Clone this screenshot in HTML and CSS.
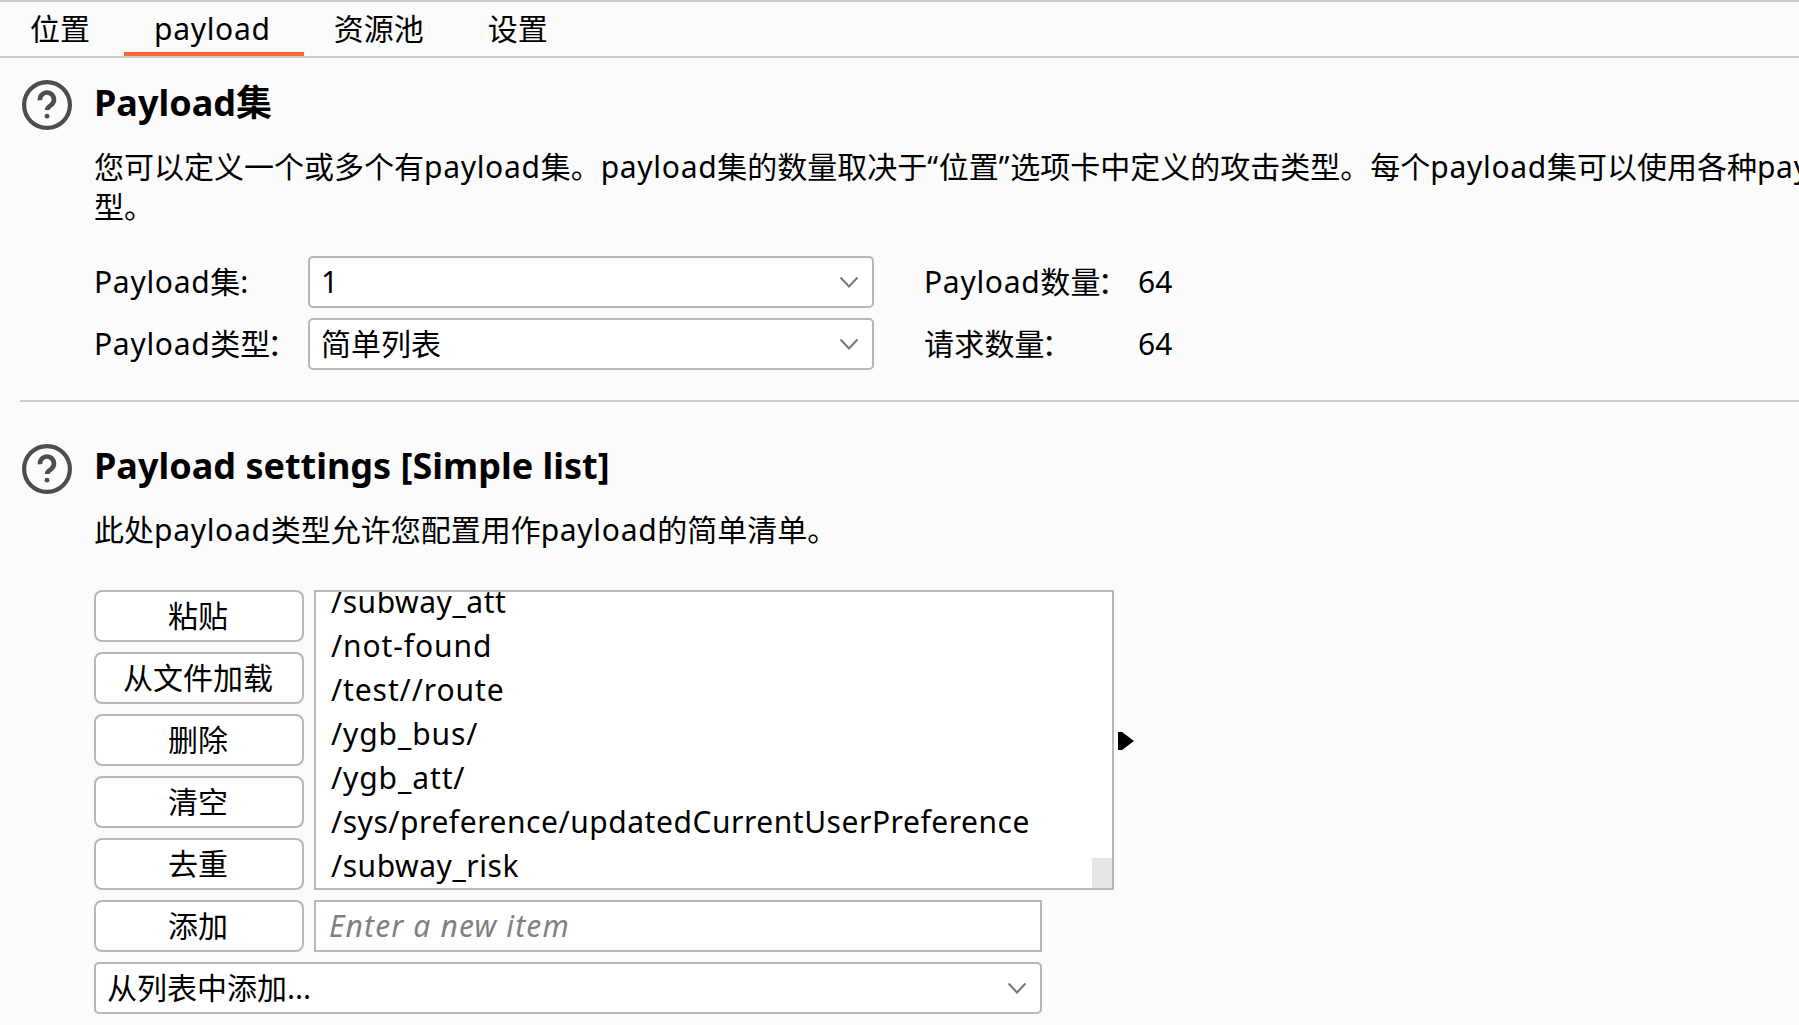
FILE: index.html
```html
<!DOCTYPE html>
<html lang="zh-CN">
<head>
<meta charset="utf-8">
<title>Payload</title>
<link rel="stylesheet" href="styles.css">
</head>
<body>
<nav class="tabs">
  <a class="tab">位置</a>
  <a class="tab tab-active"><span class="lat">payload</span></a>
  <a class="tab">资源池</a>
  <a class="tab">设置</a>
</nav>
<main>
  <section class="section">
    <svg class="help" viewBox="0 0 50 50"><circle cx="25" cy="25" r="22.900"/><path class="mark" d="M18 20.300a7 7 0 1 1 11.100 4.900c-2.300 1.600-4 2.500-4 4.800"/><circle class="dot" cx="25" cy="36.200" r="2.400"/></svg>
    <div class="content">
      <h2 class="title">Payload集</h2>
      <p class="desc">您可以定义一个或多个有<span class="lat">payload</span>集。<span class="lat">payload</span>集的数量取决于<span class="quote">“</span>位置<span class="quote">”</span>选项卡中定义的攻击类型。每个<span class="lat">payload</span>集可以使用各种<span class="lat">payload</span><br>型。</p>
      <div class="form">
        <label><span class="lat">Payload</span>集:</label>
        <div class="select"><span>1</span><svg class="chevron" viewBox="0 0 20 12"><path d="M1.500 1.500 10 10.500 18.500 1.500"/></svg></div>
        <span class="stat"><span class="lat">Payload</span>数量<span class="colon">：</span></span>
        <span>64</span>
        <label><span class="lat">Payload</span>类型<span class="colon">：</span></label>
        <div class="select"><span>简单列表</span><svg class="chevron" viewBox="0 0 20 12"><path d="M1.500 1.500 10 10.500 18.500 1.500"/></svg></div>
        <span class="stat">请求数量<span class="colon">：</span></span>
        <span>64</span>
      </div>
    </div>
  </section>
  <hr class="divider">
  <section class="section section-settings">
    <svg class="help" viewBox="0 0 50 50"><circle cx="25" cy="25" r="22.900"/><path class="mark" d="M18 20.300a7 7 0 1 1 11.100 4.900c-2.300 1.600-4 2.500-4 4.800"/><circle class="dot" cx="25" cy="36.200" r="2.400"/></svg>
    <div class="content">
      <h2 class="title">Payload settings [Simple list]</h2>
      <p class="desc">此处<span class="lat">payload</span>类型允许您配置用作<span class="lat">payload</span>的简单清单。</p>
      <div class="editor">
        <div class="buttons">
          <button class="btn">粘贴</button>
          <button class="btn">从文件加载</button>
          <button class="btn">删除</button>
          <button class="btn">清空</button>
          <button class="btn">去重</button>
        </div>
        <div class="list">
          <ul class="items">
            <li>/subway_att</li>
            <li class="loose">/not-found</li>
            <li class="loose">/test//route</li>
            <li class="loose">/ygb_bus/</li>
            <li class="loose">/ygb_att/</li>
            <li>/sys/preference/updatedCurrentUserPreference</li>
            <li>/subway_risk</li>
          </ul>
          <div class="thumb"></div>
        </div>
        <svg class="arrow" viewBox="0 0 16 18"><path d="M0 0h4l12 9-12 9H0z"/></svg>
      </div>
      <div class="add-row">
        <button class="btn">添加</button>
        <div class="input">Enter a new item</div>
      </div>
      <div class="select select-wide"><span>从列表中添加...</span><svg class="chevron" viewBox="0 0 20 12"><path d="M1.500 1.500 10 10.500 18.500 1.500"/></svg></div>
    </div>
  </section>
</main>
</body>
</html>
```
FILE: styles.css
```css
* { box-sizing: border-box; }

body {
  margin: 0;
  height: 1025px;
  overflow: hidden;
  background: #fbfbfb;
  color: #000;
  font: 30px/52px "Noto Sans", "Noto Sans CJK SC", sans-serif;
  white-space: nowrap;
}

.lat { letter-spacing: 0.7px; }

.tabs {
  display: flex;
  height: 58px;
  border-top: 2px solid #c8d0cc;
  border-bottom: 2px solid #c8d0cc;
}

.tab { padding: 1px 34px 0 30px; }
.tab-active { padding-right: 33px; box-shadow: inset 0 -4px #ff6633; }

.section {
  display: flex;
  gap: 22px;
  padding: 21px 0 30px 22px;
}

.section-settings { padding-top: 40px; padding-bottom: 0; }

.help {
  flex: none;
  width: 50px;
  height: 50px;
  margin-top: 1px;
  fill: none;
  stroke: #4d4d4d;
  stroke-width: 4.2;
}

.section-settings .help { margin-top: 2px; }
.help .mark { stroke-width: 4.6; }
.help .dot { fill: #4d4d4d; stroke: none; }

.title {
  margin: 0 0 20px;
  font-size: 36px;
  line-height: 48px;
  font-weight: 700;
}

.desc { margin: 0 0 29px; line-height: 40px; }
.section-settings .desc { margin-bottom: 40px; }
.quote { display: inline-block; width: 11.5px; }
.colon { margin-left: -3px; }

.form {
  display: grid;
  grid-template-columns: 214px 566px 264px auto;
  row-gap: 10px;
}

.form > span { letter-spacing: 0.2px; }
.stat { padding-left: 50px; }

.select {
  display: flex;
  align-items: center;
  justify-content: space-between;
  height: 52px;
  padding: 0 13px 0 11px;
  border: 2px solid #bab5b6;
  border-radius: 5px;
  background: #fff;
  line-height: 48px;
}

.chevron {
  width: 20px;
  height: 12px;
  fill: none;
  stroke: #777;
  stroke-width: 2;
}

.divider {
  height: 2px;
  margin: 0 0 0 20px;
  border: 0;
  background: #cecece;
}

.editor { display: flex; }

.buttons {
  display: flex;
  flex-direction: column;
  gap: 10px;
  margin-right: 10px;
}

.btn {
  width: 210px;
  height: 52px;
  padding: 0 2px 0 0;
  border: 2px solid #bab5b6;
  border-radius: 8px;
  background: #fff;
  color: #000;
  font: inherit;
  line-height: 48px;
}

.list {
  display: flex;
  justify-content: space-between;
  align-items: flex-end;
  width: 800px;
  height: 300px;
  overflow: hidden;
  border: 2px solid #bab5b6;
  background: #fff;
}

.items {
  margin: 0;
  padding: 0 0 0 15px;
  list-style: none;
  line-height: 44px;
  letter-spacing: 0.54px;
}

.items .loose { letter-spacing: 0.9px; }

.thumb { width: 20px; height: 30px; background: #e6e6e6; }

.arrow { width: 16px; height: 18px; margin: 142px 0 0 4px; }

.add-row { display: flex; gap: 10px; margin: 10px 0; }

.input {
  width: 728px;
  height: 52px;
  padding-left: 13px;
  border: 2px solid #bab5b6;
  background: #fff;
  color: #808080;
  font-style: italic;
  line-height: 48px;
  letter-spacing: 1.15px;
}

.select-wide { width: 948px; }
```
